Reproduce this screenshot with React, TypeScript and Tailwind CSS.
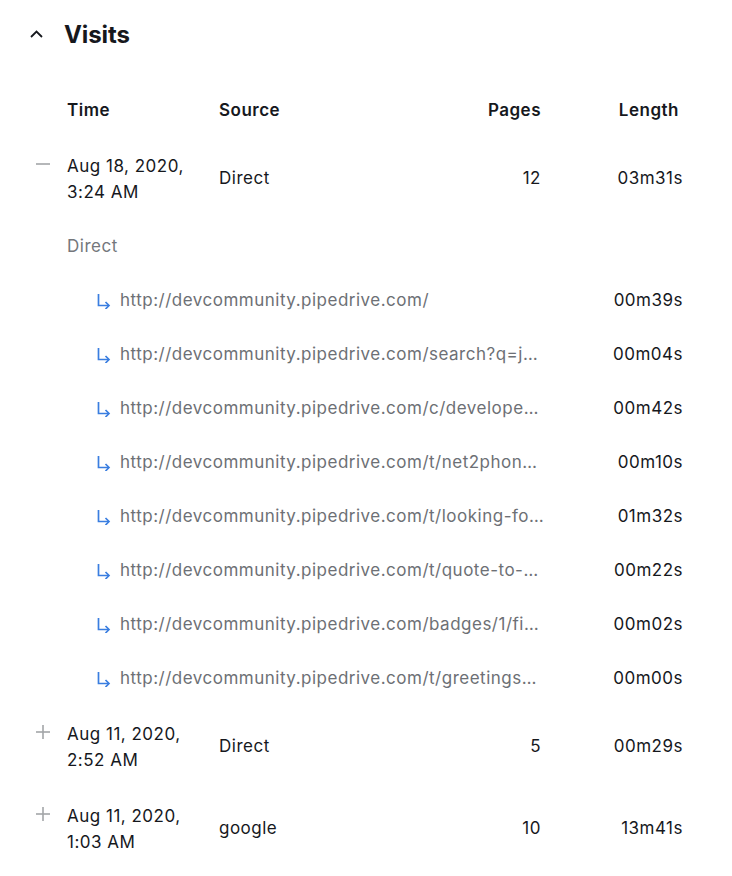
const font = { fontFamily: "Inter, 'Noto Sans', sans-serif" };

type Visit = {
  date: string;
  time: string;
  source: string;
  pages: number;
  length: string;
  open?: boolean;
  hits?: { url: string; length: string }[];
};

const visits: Visit[] = [
  {
    date: "Aug 18, 2020,",
    time: "3:24 AM",
    source: "Direct",
    pages: 12,
    length: "03m31s",
    open: true,
    hits: [
      { url: "http://devcommunity.pipedrive.com/", length: "00m39s" },
      { url: "http://devcommunity.pipedrive.com/search?q=json", length: "00m04s" },
      { url: "http://devcommunity.pipedrive.com/c/developers-corner", length: "00m42s" },
      { url: "http://devcommunity.pipedrive.com/t/net2phone-integration", length: "00m10s" },
      { url: "http://devcommunity.pipedrive.com/t/looking-for-help", length: "01m32s" },
      { url: "http://devcommunity.pipedrive.com/t/quote-to-deal", length: "00m22s" },
      { url: "http://devcommunity.pipedrive.com/badges/1/first", length: "00m02s" },
      { url: "http://devcommunity.pipedrive.com/t/greetings-all", length: "00m00s" },
    ],
  },
  { date: "Aug 11, 2020,", time: "2:52 AM", source: "Direct", pages: 5, length: "00m29s" },
  { date: "Aug 11, 2020,", time: "1:03 AM", source: "google", pages: 10, length: "13m41s" },
];

function Toggle({ open }: { open?: boolean }) {
  return (
    <svg width="16" height="16" viewBox="0 0 16 16" className="mt-[3px]">
      <path d="M1 8h14" stroke="#a3a5a8" strokeWidth="1.6" />
      {!open && <path d="M8 1v14" stroke="#a3a5a8" strokeWidth="1.6" />}
    </svg>
  );
}

function SubArrow() {
  return (
    <svg width="14" height="16" viewBox="0 0 14 16" fill="none">
      <path d="M1.5 1v11.5H12" stroke="#3a7ee0" strokeWidth="1.7" />
      <path d="M8.5 9l3.5 3.5L8.5 16" stroke="#3a7ee0" strokeWidth="1.7" />
    </svg>
  );
}

export default function App() {
  return (
    <div className="min-h-screen bg-white text-[#16181d] text-[17px] tracking-[0.5px]" style={font}>
      <div className="flex items-center h-[69px] pl-[30px] gap-[21px]">
        <svg width="13" height="8" viewBox="0 0 13 8" fill="none" className="mt-[-2px]">
          <path d="M1 7l5.5-5.5L12 7" stroke="#16181d" strokeWidth="1.8" />
        </svg>
        <h2 className="text-[24px] font-bold tracking-[-0.1px]">Visits</h2>
      </div>

      <div className="mt-[15px]">
        <div className="flex items-center h-[54px] font-semibold">
          <div className="w-[67px]" />
          <div className="w-[152px]">Time</div>
          <div className="w-[222px]">Source</div>
          <div className="w-[100px] text-right">Pages</div>
          <div className="w-[138px] text-right">Length</div>
        </div>

        {visits.map((v, i) => (
          <div key={i}>
            <div className="flex items-center h-[82px]">
              <div className="w-[67px] self-start pt-[15px] pl-[35px]">
                <Toggle open={v.open} />
              </div>
              <div className="w-[152px] leading-[26px]">
                <div>{v.date}</div>
                <div>{v.time}</div>
              </div>
              <div className="w-[222px]">{v.source}</div>
              <div className="w-[100px] text-right">{v.pages}</div>
              <div className="w-[142px] text-right">{v.length}</div>
            </div>

            {v.open && (
              <div>
                <div className="flex items-center h-[54px] pl-[67px] text-[#74777c]">{v.source}</div>
                {v.hits?.map((h, j) => (
                  <div key={j} className="flex items-center h-[54px]">
                    <div className="w-[97px]" />
                    <div className="w-[23px] flex items-center">
                      <SubArrow />
                    </div>
                    <div className="w-[424px] truncate text-[#6d7075]">{h.url}</div>
                    <div className="w-[139px] text-right">{h.length}</div>
                  </div>
                ))}
              </div>
            )}
          </div>
        ))}
      </div>
    </div>
  );
}
